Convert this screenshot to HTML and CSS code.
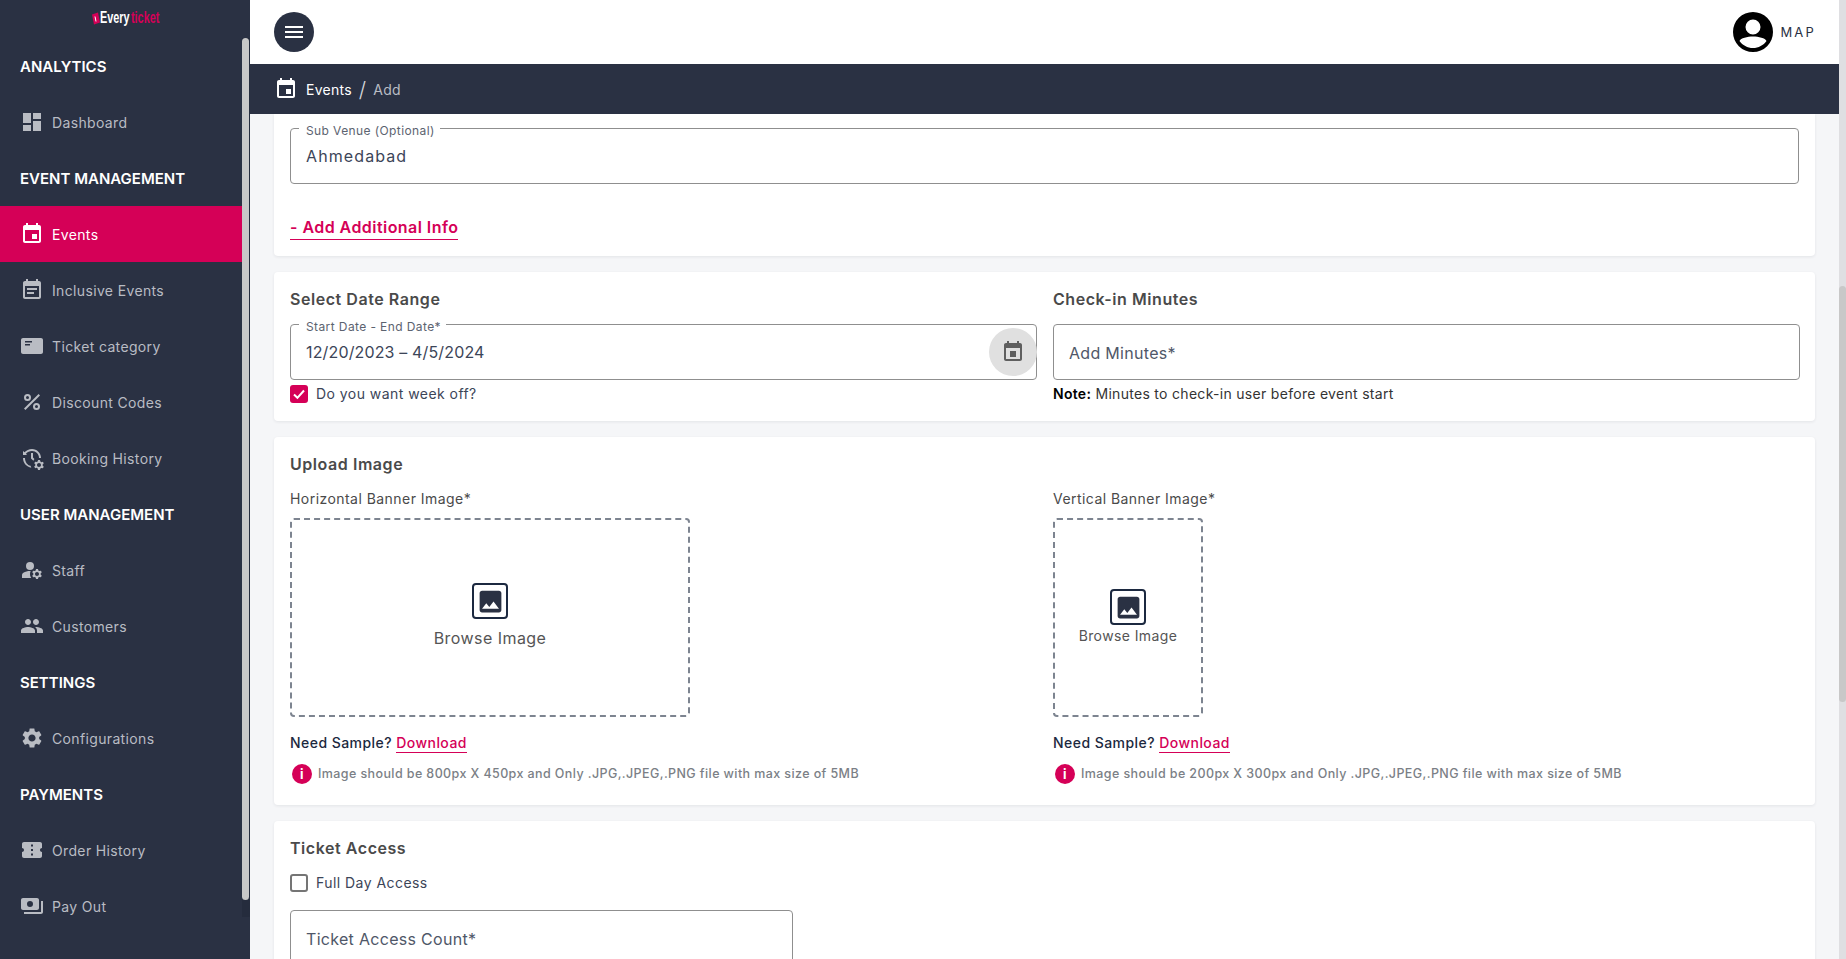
FILE: index.html
```html
<!DOCTYPE html>
<html lang="en">
<head>
<meta charset="UTF-8" />
<meta name="viewport" content="width=device-width, initial-scale=1.0" />
<title>Events / Add</title>
<link rel="stylesheet" href="styles.css">
</head>
<body>

<!-- Sidebar -->
<aside class="sidebar">
  <div class="logo">
    <svg class="logo-icon" viewBox="0 0 8 12"><path d="M0 2l6-2 2 10-6 2z" fill="#d50057"/><path d="M3 4l1 5" stroke="#fff" stroke-width="1"/></svg>
    <span class="logo-text"><span class="logo-every">Every</span><span class="logo-ticket">ticket</span></span>
  </div>
  <div class="side-scroll">
    <nav class="menu">
      <div class="menu-title">ANALYTICS</div>
      <a class="menu-item"><svg viewBox="0 0 24 24"><path d="M3 13h8V3H3zm0 8h8v-6H3zm10 0h8V11h-8zm0-18v6h8V3z"/></svg>Dashboard</a>
      <div class="menu-title">EVENT MANAGEMENT</div>
      <a class="menu-item active"><svg viewBox="0 0 24 24"><path d="M17 12h-5v5h5zM16 1v2H8V1H6v2H5c-1.11 0-1.99.9-1.99 2L3 19c0 1.100.89 2 2 2h14c1.100 0 2-.9 2-2V5c0-1.100-.9-2-2-2h-1V1zm3 18H5V8h14z"/></svg>Events</a>
      <a class="menu-item"><svg viewBox="0 0 24 24"><path d="M17 10H7v2h10zm2-7h-1V1h-2v2H8V1H6v2H5c-1.110 0-1.990.9-1.990 2L3 19c0 1.100.89 2 2 2h14c1.100 0 2-.9 2-2V5c0-1.100-.9-2-2-2zm0 16H5V8h14zm-5-5H7v2h7z"/></svg>Inclusive Events</a>
      <a class="menu-item"><svg viewBox="0 0 24 24"><path fill-rule="evenodd" d="M3 4H21c1 0 2 .9 2 2v12c0 1.100-1 2-2 2H3c-1 0-2-.9-2-2V6c0-1.100 1-2 2-2zM5 7v1.500h7V7zm0 3v1.500h5V10z"/></svg>Ticket category</a>
      <a class="menu-item"><svg viewBox="0 0 24 24"><path d="M7.500 11a3.500 3.500 0 1 0 0-7 3.500 3.500 0 0 0 0 7zm0-5a1.500 1.500 0 1 1 0 3 1.500 1.500 0 0 1 0-3zm9 7a3.500 3.500 0 1 0 0 7 3.500 3.500 0 0 0 0-7zm0 5a1.500 1.500 0 1 1 0-3 1.500 1.500 0 0 1 0 3zM5.410 20 4 18.590 18.590 4 20 5.410z"/></svg>Discount Codes</a>
      <a class="menu-item"><svg viewBox="0 0 24 24"><path d="M22.690 18.370l1.140-1-1-1.730-1.450.49c-.32-.27-.68-.48-1.080-.63L20 14h-2l-.3 1.490c-.4.15-.76.36-1.080.63l-1.450-.49-1 1.730 1.140 1c-.08.5-.08.76 0 1.260l-1.140 1 1 1.730 1.450-.49c.32.27.68.48 1.080.63L18 24h2l.3-1.490c.4-.15.76-.36 1.080-.63l1.450.49 1-1.730-1.140-1c.08-.51.08-.76 0-1.270zM19 21c-1.100 0-2-.9-2-2s.9-2 2-2 2 .9 2 2-.9 2-2 2zM11 7v5.410l2.360 2.360 1.040-1.790-1.400-1.390V7zM21 12c0-4.970-4.030-9-9-9-2.970 0-5.630 1.300-7.460 3.360L3 5v4h4L5.960 7.640C7.420 6.020 9.590 5 12 5c3.860 0 7 3.140 7 7zM10.580 19.830C7.310 19.150 5 16 5 12H3c0 4.970 3.580 8.890 8.300 9.790z"/></svg>Booking History</a>
      <div class="menu-title">USER MANAGEMENT</div>
      <a class="menu-item"><svg viewBox="0 0 24 24"><circle cx="10" cy="8" r="4"/><path d="M10.670 13.020C10.450 13.010 10.230 13 10 13c-2.420 0-4.680.67-6.610 1.820C2.510 15.340 2 16.320 2 17.350V20h9.260C10.470 18.870 10 17.490 10 16c0-1.070.25-2.070.67-2.980z"/><path d="M20.750 16c0-.22-.03-.42-.06-.63l1.140-1.010-1-1.730-1.450.49c-.32-.27-.68-.48-1.080-.63L18 11h-2l-.3 1.490c-.4.15-.76.36-1.080.63l-1.450-.49-1 1.730 1.140 1.010c-.03.21-.06.41-.06.63s.03.42.06.63l-1.140 1.010 1 1.730 1.450-.49c.32.27.68.48 1.080.63L16 21h2l.3-1.490c.4-.15.76-.36 1.080-.63l1.450.49 1-1.730-1.140-1.010c.03-.21.06-.41.06-.63zM17 18c-1.100 0-2-.9-2-2s.9-2 2-2 2 .9 2 2-.9 2-2 2z"/></svg>Staff</a>
      <a class="menu-item"><svg viewBox="0 0 24 24"><path d="M16 11c1.660 0 2.990-1.340 2.990-3S17.660 5 16 5s-3 1.340-3 3 1.340 3 3 3zm-8 0c1.660 0 2.990-1.340 2.990-3S9.660 5 8 5 5 6.340 5 8s1.340 3 3 3zm0 2c-2.330 0-7 1.170-7 3.500V19h14v-2.500C15 14.170 10.330 13 8 13zm8 0c-.29 0-.62.02-.97.05 1.160.84 1.970 1.970 1.970 3.450V19h6v-2.500c0-2.330-4.670-3.500-7-3.500z"/></svg>Customers</a>
      <div class="menu-title">SETTINGS</div>
      <a class="menu-item"><svg viewBox="0 0 24 24"><path d="M19.140 12.940c.04-.3.060-.61.060-.94 0-.32-.02-.64-.07-.94l2.030-1.580c.18-.14.23-.41.120-.61l-1.920-3.320c-.12-.22-.37-.29-.59-.22l-2.390.96c-.5-.38-1.030-.7-1.620-.94l-.36-2.540c-.04-.24-.24-.41-.48-.41h-3.840c-.24 0-.43.17-.47.41l-.36 2.540c-.59.24-1.130.57-1.620.94l-2.390-.96c-.22-.08-.47 0-.59.22L2.740 8.870c-.12.21-.08.47.12.61l2.030 1.580c-.05.3-.09.63-.09.94s.02.64.07.94l-2.030 1.580c-.18.14-.23.41-.12.61l1.920 3.320c.12.22.37.29.59.22l2.390-.96c.5.38 1.030.7 1.620.94l.36 2.540c.05.24.24.41.48.41h3.840c.24 0 .44-.17.47-.41l.36-2.540c.59-.24 1.130-.56 1.620-.94l2.390.96c.22.08.47 0 .59-.22l1.920-3.320c.12-.22.07-.47-.12-.61l-2.010-1.580zM12 15.600c-1.980 0-3.600-1.620-3.600-3.600s1.620-3.600 3.600-3.600 3.600 1.620 3.600 3.600-1.620 3.600-3.600 3.600z"/></svg>Configurations</a>
      <div class="menu-title">PAYMENTS</div>
      <a class="menu-item"><svg viewBox="0 0 24 24"><path d="M22 10V6c0-1.110-.9-2-2-2H4c-1.100 0-1.990.89-1.990 2v4c1.100 0 1.990.9 1.990 2s-.89 2-2 2v4c0 1.100.9 2 2 2h16c1.100 0 2-.9 2-2v-4c-1.100 0-2-.9-2-2s.9-2 2-2zm-9 7.500h-2v-2h2zm0-4.500h-2v-2h2zm0-4.500h-2v-2h2z"/></svg>Order History</a>
      <a class="menu-item"><svg viewBox="0 0 24 24"><path d="M19 14V6c0-1.100-.9-2-2-2H3c-1.100 0-2 .9-2 2v8c0 1.100.9 2 2 2h14c1.100 0 2-.9 2-2zm-9-1a3 3 0 1 1 0-6 3 3 0 0 1 0 6zm13-6v11c0 1.100-.9 2-2 2H4v-2h17V7z"/></svg>Pay Out</a>
    </nav>
    <div class="side-bar"><div class="side-thumb"></div></div>
  </div>
</aside>

<div class="page">
  <header class="topbar">
    <button class="burger"><svg viewBox="0 0 24 24"><path d="M3 18h18v-2H3zm0-5h18v-2H3zm0-7v2h18V6z"/></svg></button>
    <div class="user">
      <svg viewBox="0 0 40 40"><path d="M20 0a20 20 0 1 0 0 40 20 20 0 0 0 0-40zm0 7.500a7.500 7.500 0 1 1 0 15 7.500 7.500 0 0 1 0-15zM20 36c-5.500 0-10.500-2.700-13.500-7 1-3 8-4.500 13.500-4.500S32.500 26 33.500 29c-3 4.300-8 7-13.500 7z"/></svg>
      <span>MAP</span>
    </div>
  </header>

  <div class="crumbs">
    <svg viewBox="0 0 24 24"><path d="M17 12h-5v5h5zM16 1v2H8V1H6v2H5c-1.110 0-1.990.9-1.990 2L3 19c0 1.100.89 2 2 2h14c1.100 0 2-.9 2-2V5c0-1.100-.9-2-2-2h-1V1zm3 18H5V8h14z"/></svg>
    <span class="crumb-main">Events</span>
    <span class="crumb-sep">/</span>
    <span class="crumb-sub">Add</span>
  </div>

  <main class="content">
    <!-- Additional info (scrolled) -->
    <section class="card card-first">
      <div class="field">
        <fieldset><legend>Sub Venue (Optional)</legend></fieldset>
        <span class="field-value venue">Ahmedabad</span>
      </div>
      <a class="add-info">- Add Additional Info</a>
    </section>

    <!-- Dates -->
    <section class="card two-col">
      <div>
        <h3>Select Date Range</h3>
        <div class="field">
          <fieldset><legend>Start Date - End Date*</legend></fieldset>
          <span class="field-value">12/20/2023 – 4/5/2024</span>
          <span class="cal-btn"><svg viewBox="0 0 24 24"><path d="M15 11H9v6h6zM16 1v2H8V1H6v2H5c-1.110 0-1.990.9-1.990 2L3 19c0 1.100.89 2 2 2h14c1.100 0 2-.9 2-2V5c0-1.100-.9-2-2-2h-1V1zm3 18H5V8h14z"/></svg></span>
        </div>
        <label class="check-row">
          <span class="check checked"><svg viewBox="0 0 18 18"><path d="M4 9.500l3.400 3.300L14 5.500" fill="none" stroke="#fff" stroke-width="2"/></svg></span>
          Do you want week off?
        </label>
      </div>
      <div>
        <h3>Check-in Minutes</h3>
        <div class="field plain">
          <span class="field-placeholder">Add Minutes*</span>
        </div>
        <p class="note"><b>Note:</b> Minutes to check-in user before event start</p>
      </div>
    </section>

    <!-- Images -->
    <section class="card card-upload">
      <h3>Upload Image</h3>
      <div class="upload-grid">
        <div>
          <div class="upload-label">Horizontal Banner Image*</div>
          <div class="drop drop-wide">
            <span class="img-icon"><svg viewBox="0 0 24 24"><path d="M21 19V5c0-1.100-.9-2-2-2H5c-1.100 0-2 .9-2 2v14c0 1.100.9 2 2 2h14c1.100 0 2-.9 2-2zM8.500 13.500l2.500 3.010L14.500 12l4.500 6H5z"/></svg></span>
            <span class="drop-text">Browse Image</span>
          </div>
          <div class="sample">Need Sample? <a>Download</a></div>
          <div class="hint"><span class="info">i</span>Image should be 800px X 450px and Only .JPG,.JPEG,.PNG file with max size of 5MB</div>
        </div>
        <div>
          <div class="upload-label">Vertical Banner Image*</div>
          <div class="drop drop-tall">
            <span class="img-icon"><svg viewBox="0 0 24 24"><path d="M21 19V5c0-1.100-.9-2-2-2H5c-1.100 0-2 .9-2 2v14c0 1.100.9 2 2 2h14c1.100 0 2-.9 2-2zM8.500 13.500l2.500 3.010L14.500 12l4.500 6H5z"/></svg></span>
            <span class="drop-text">Browse Image</span>
          </div>
          <div class="sample">Need Sample? <a>Download</a></div>
          <div class="hint"><span class="info">i</span>Image should be 200px X 300px and Only .JPG,.JPEG,.PNG file with max size of 5MB</div>
        </div>
      </div>
    </section>

    <!-- Ticket access -->
    <section class="card card-access">
      <h3>Ticket Access</h3>
      <label class="check-row">
        <span class="check"></span>
        Full Day Access
      </label>
      <div class="field plain access-field">
        <span class="field-placeholder">Ticket Access Count*</span>
      </div>
    </section>
  </main>
</div>

<div class="page-bar"><div class="page-thumb"></div></div>

</body>
</html>
```

FILE: styles.css
```css
* { box-sizing: border-box; }

html, body {
  height: 100%;
  margin: 0;
  overflow: hidden;
}

body {
  display: flex;
  font-family: 'Inter', 'Open Sans', sans-serif;
  background: #f5f6f8;
  color: #2a3143;
}

/* Sidebar */
.sidebar {
  width: 250px;
  flex: none;
  background: #2a3143;
  display: flex;
  flex-direction: column;
}

.logo {
  height: 38px;
  display: flex;
  align-items: center;
  padding: 0 0 2px 92px;
}

.logo-icon { width: 8px; height: 13px; flex: none; }

.logo-text {
  font-family: 'Liberation Sans', sans-serif;
  font-size: 17px;
  font-weight: 700;
  display: inline-block;
  transform: scaleX(.64);
  transform-origin: left;
  white-space: nowrap;
}
.logo-every { color: #fff; }
.logo-ticket { color: #d50057; margin-left: 2px; }

.side-scroll { flex: 1; display: flex; min-height: 0; }

.menu { width: 242px; }

.menu-title {
  height: 56px;
  display: flex;
  align-items: center;
  padding-left: 20px;
  color: #fff;
  font-size: 15px;
  font-weight: 600;
}

.menu-item {
  height: 56px;
  display: flex;
  align-items: center;
  gap: 8px;
  padding-left: 20px;
  color: #b9bcc3;
  font-size: 14px;
  letter-spacing: .35px;
}
.menu-item svg { width: 24px; height: 24px; fill: currentColor; flex: none; }
.menu-item.active { background: #d50057; color: #fff; }

.side-bar { width: 8px; height: 879px; background: #252c3d; }
.side-thumb { height: 862px; background: #c8c8c8; border-radius: 4px; width: 7px; }

/* Right side */
.page {
  width: 1589px;
  flex: none;
  display: flex;
  flex-direction: column;
  height: 959px;
}

.topbar {
  height: 64px;
  background: #fff;
  display: flex;
  align-items: center;
  justify-content: space-between;
  padding: 0 23px 0 24px;
  flex: none;
}

.burger {
  width: 40px;
  height: 40px;
  border: 0;
  padding: 8px;
  border-radius: 50%;
  background: #2a3143;
}
.burger svg { display: block; fill: #fff; }

.user { display: flex; align-items: center; gap: 7px; }
.user svg { width: 40px; height: 40px; fill: #000; }
.user span { font-size: 13px; letter-spacing: 2.2px; color: #2a3143; }

.crumbs {
  height: 50px;
  flex: none;
  background: #2a3143;
  display: flex;
  align-items: center;
  padding-left: 24px;
  font-size: 14px;
  letter-spacing: .25px;
}
.crumbs svg { width: 24px; height: 24px; fill: #fff; margin-right: 8px; }
.crumb-main { color: #fff; }
.crumb-sep { color: #d5d7da; font-size: 21px; margin: 0 7px; font-weight: 300; }
.crumb-sub { color: #b9bcc3; }

/* Cards */
.content {
  flex: 1;
  min-height: 0;
  overflow: hidden;
  padding: 0 24px;
  display: flex;
  flex-direction: column;
  gap: 16px;
}

.card {
  flex: none;
  background: #fff;
  border-radius: 4px;
  padding: 16px;
  box-shadow: 0 1px 3px rgba(40,50,70,.09);
}
.card-first { padding-top: 14px; height: 142px; border-radius: 0 0 4px 4px; }
.card-upload { padding-bottom: 21px; }

h3 {
  margin: 0;
  font-size: 16px;
  line-height: 22px;
  font-weight: 600;
  color: #4a4a4a;
  letter-spacing: .55px;
}

.two-col {
  display: grid;
  grid-template-columns: 747px 747px;
  gap: 16px;
  height: 149px;
}
.two-col .field { margin-top: 14px; }

.field {
  position: relative;
  height: 56px;
  display: flex;
  align-items: center;
  padding-left: 16px;
}

.plain { border: 1px solid #8f8f8f; border-radius: 4px; padding-left: 15px; }

fieldset {
  position: absolute;
  inset: -6px 0 0;
  margin: 0;
  padding: 0 8px;
  border: 1px solid #8f8f8f;
  border-radius: 4px;
  pointer-events: none;
}
legend {
  padding: 0 5px 0 7px;
  font-size: 12px;
  line-height: 12px;
  letter-spacing: .4px;
  color: #5c6370;
  transform: translateY(3px);
}

.field-value {
  font-size: 16px;
  letter-spacing: .15px;
  color: #3c4558;
}
.venue { letter-spacing: 1.1px; }
.field-placeholder {
  font-size: 16px;
  letter-spacing: .3px;
  color: #4f5768;
  padding-top: 1px;
}

.cal-btn {
  position: absolute;
  right: 0;
  top: 4px;
  width: 48px;
  height: 48px;
  border-radius: 50%;
  background: #e0e0e0;
  display: flex;
  align-items: center;
  justify-content: center;
}
.cal-btn svg { width: 24px; height: 24px; fill: #5f5f5f; }

.add-info {
  display: inline-block;
  margin-top: 31px;
  font-size: 16px;
  line-height: 24px;
  font-weight: 600;
  color: #d50057;
  border-bottom: 1.500px solid #d50057;
  letter-spacing: .45px;
}

.check-row {
  display: flex;
  align-items: center;
  gap: 8px;
  margin-top: 5px;
  font-size: 14px;
  line-height: 18px;
  letter-spacing: .45px;
  color: #3c4558;
}
.check {
  width: 18px;
  height: 18px;
  border: 2px solid #757575;
  border-radius: 3px;
  flex: none;
}
.check.checked { background: #d50057; border: 0; }
.check svg { display: block; }

.note {
  margin: 5px 0 0;
  font-size: 14px;
  line-height: 18px;
  letter-spacing: .3px;
  color: #333;
}
.note b { color: #000; font-weight: 600; }

/* Upload */
.upload-grid {
  display: grid;
  grid-template-columns: 747px 747px;
  gap: 16px;
  margin-top: 14px;
}
.upload-label {
  font-size: 14px;
  line-height: 20px;
  letter-spacing: .45px;
  color: #4a4a4a;
}
.drop {
  height: 199px;
  margin-top: 9px;
  border: 2px dashed #7d8490;
  border-radius: 4px;
  display: flex;
  flex-direction: column;
  align-items: center;
}
.drop-wide { width: 400px; padding-top: 63px; }
.drop-tall { width: 150px; padding-top: 69px; }

.img-icon {
  width: 36px;
  height: 36px;
  border: 2.500px solid #1c2940;
  border-radius: 4px;
  display: flex;
  align-items: center;
  justify-content: center;
}
.img-icon svg { width: 29px; height: 29px; fill: #2a3143; }

.drop-text { color: #555; }
.drop-wide .drop-text { font-size: 16px; margin-top: 9px; letter-spacing: .45px; }
.drop-tall .drop-text { font-size: 14px; margin-top: 2px; letter-spacing: .4px; }

.sample {
  margin-top: 16px;
  font-size: 14px;
  line-height: 20px;
  font-weight: 500;
  letter-spacing: .45px;
  color: #1c2940;
}
.sample a {
  color: #d50057;
  border-bottom: 1px solid #d50057;
  padding-bottom: 1px;
}

.hint {
  display: flex;
  align-items: center;
  gap: 6px;
  margin-top: 11px;
  padding-left: 2px;
  font-size: 12.500px;
  line-height: 20px;
  font-weight: 500;
  letter-spacing: .4px;
  color: #7b7f86;
}
.info {
  width: 20px;
  height: 20px;
  border-radius: 50%;
  background: #d50057;
  color: #fff;
  font-size: 13px;
  font-weight: 700;
  display: flex;
  align-items: center;
  justify-content: center;
  flex: none;
}

.card-access .check-row { margin-top: 15px; }
.access-field { width: 503px; margin-top: 18px; }

/* Page scrollbar */
.page-bar {
  width: 7px;
  flex: none;
  height: 959px;
  padding-top: 286px;
  background: #dfdfe2;
}
.page-thumb { height: 416px; background: #c8c8c8; border-radius: 4px; }
```
